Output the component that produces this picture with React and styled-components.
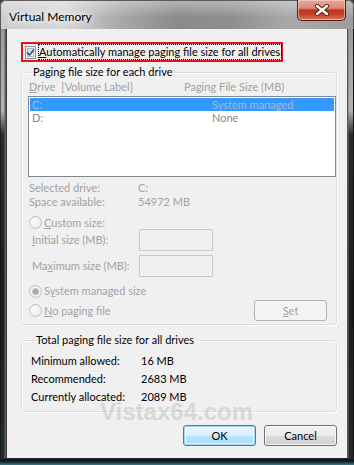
import React from 'react';
import styled, { createGlobalStyle, css } from 'styled-components';

const Global = createGlobalStyle`
  html, body { margin: 0; padding: 0; background: #3a3a3a; }
  body { font-family: Lato, "Liberation Sans", sans-serif; font-size: 11px; color: #000; }
  * { box-sizing: border-box; }
`;

const Window = styled.div`
  width: 354px;
  height: 465px;
  display: grid;
  grid-template-columns: 7px 340px 7px;
  grid-template-rows: 29px 429px 7px;
  border-radius: 6px 6px 0 0;
  overflow: hidden;
  background: linear-gradient(180deg, #c4c4c4 0px, #9a9a9a 29px, #a9a9a9 80px, #b3b3b3 110px, #2b2b2b 135px, #1c1c1c 300px, #202a2e 455px, #1d4a57 465px);
`;

const TitleBar = styled.div`
  grid-column: 1 / 4;
  display: flex;
  align-items: flex-start;
  padding: 0 7px 0 8px;
  background:
    linear-gradient(180deg, rgba(255,255,255,0.35) 0%, rgba(255,255,255,0) 60%),
    linear-gradient(90deg, #cdcdcd 0%, #d6d6d6 18%, #a8a8a8 34%, #8a8a8a 50%, #8e8e8e 65%, #a9a9a9 82%, #9c9c9c 100%);
  border: 1px solid #5a5a5a;
  border-bottom: none;
  border-radius: 6px 6px 0 0;
`;

const Title = styled.span`
  margin-top: 8px;
  line-height: 15px;
  font-size: 12px;
  color: #000;
  text-shadow: 0 0 6px #fff, 0 0 10px #fff, 0 0 14px rgba(255,255,255,0.9);
`;

const CloseButton = styled.div`
  margin-left: auto;
  margin-top: -1px;
  width: 49px;
  height: 21px;
  border: 1px solid #4f1a12;
  border-top: none;
  border-radius: 0 0 5px 5px;
  display: flex;
  align-items: center;
  justify-content: center;
  background: linear-gradient(180deg, #e8a89c 0%, #dc8a7a 40%, #b8321c 52%, #c2462c 75%, #de7a58 100%);
  box-shadow: inset 0 0 0 1px rgba(255,220,210,0.55);
`;

const SideFrame = styled.div`
  grid-row: 2;
  grid-column: ${p => p.$right ? 3 : 1};
  background: ${p => p.$right
    ? 'linear-gradient(90deg, #3c3c3c 0px, #6f6f6f 1px, transparent 2px, transparent 6px, #101010 6px)'
    : 'linear-gradient(90deg, #101010 0px, transparent 1px, transparent 4px, #6f6f6f 5px, #3c3c3c 6px)'};
`;

const BottomFrame = styled.div`
  grid-column: 1 / 4;
  grid-row: 3;
  background: linear-gradient(180deg, #3c3c3c 0px, #151515 1px, #151515 3px, #1e4a58 5px, #3d7a8a 7px);
`;

const Client = styled.div`
  grid-column: 2;
  grid-row: 2;
  position: relative;
  background: #f0f0f0;
  display: flex;
  flex-direction: column;
  padding: 13px 10px 12px 14px;
`;

const AutoBox = styled.div`
  align-self: flex-start;
  width: 262px;
  height: 20px;
  border: 2px solid #e2141e;
  display: flex;
  align-items: center;
  padding-left: 2px;
  gap: 2px;
`;

const CheckBox = styled.span`
  width: 13px;
  height: 13px;
  border: 1px solid #8e8f8f;
  background: #f4f4f4;
  display: flex;
  align-items: center;
  justify-content: center;
  position: relative;
  &::before {
    content: '';
    position: absolute;
    inset: 1px;
    border: 1px solid #b1b5ba;
    background: linear-gradient(135deg, #cfd3d8 0%, #eef0f2 60%, #fbfbfb 100%);
  }
  svg { position: relative; }
`;

const FocusLabel = styled.span`
  border: 1px dotted #000;
  line-height: 14px;
  padding-right: 1px;
  white-space: nowrap;
`;

const Group = styled.fieldset`
  margin: ${p => p.$mt}px 0 0 0;
  width: 316px;
  border: 1px solid #d5dfe5;
  border-radius: 3px;
  box-shadow: inset 1px 1px 0 #fff, 1px 1px 0 #fff;
  padding: ${p => p.$pad};
  min-inline-size: 0;
  display: flex;
  flex-direction: column;
`;

const Legend = styled.legend`
  margin-left: 3px;
  padding: 0 2px;
  line-height: 14px;
  font-size: 11px;
  color: #000;
`;

const Disabled = '#a2a2a2';

const HeaderRow = styled.div`
  margin-top: 1px;
  display: grid;
  grid-template-columns: 155px 1fr;
  padding-left: 1px;
  line-height: 14px;
  color: ${Disabled};
  white-space: nowrap;
`;

const Gap = styled.span`
  display: inline-block;
  width: ${p => p.$w}px;
`;

const ListBox = styled.div`
  margin-top: 2px;
  width: 308px;
  height: 81px;
  border: 1px solid #828790;
  background: #fff;
  padding: 1px;
`;

const ListRow = styled.div`
  height: 13px;
  line-height: 13px;
  display: grid;
  grid-template-columns: 180px 1fr;
  padding-left: 2px;
  ${p => p.$selected ? css`
    background: #3399ff;
    color: #9ebbe0;
  ` : css`
    color: #8a8a8a;
  `}
`;

const InfoBlock = styled.div`
  margin-top: 4px;
  display: grid;
  grid-template-columns: 109px 1fr;
  grid-auto-rows: 14px;
  line-height: 14px;
  padding-left: 1px;
  color: ${Disabled};
`;

const RadioRow = styled.div`
  margin-top: ${p => p.$mt}px;
  height: ${p => p.$h}px;
  display: flex;
  align-items: center;
  gap: 2px;
  padding-left: 1px;
  color: ${Disabled};
  line-height: 14px;
`;

const Radio = styled.span`
  width: 13px;
  height: 13px;
  border-radius: 50%;
  border: 1px solid #c2c2c2;
  background: radial-gradient(circle at 40% 40%, #fcfcfc 0%, #ececec 70%, #e2e2e2 100%);
  display: flex;
  align-items: center;
  justify-content: center;
  flex: none;
  &::after {
    content: '';
    display: ${p => p.$checked ? 'block' : 'none'};
    width: 5px;
    height: 5px;
    border-radius: 50%;
    background: #a8a8a8;
    box-shadow: 0 0 0 1px #c8c8c8;
  }
`;

const SizeRow = styled.div`
  margin-top: ${p => p.$mt}px;
  display: grid;
  grid-template-columns: 107px 74px;
  align-items: center;
  padding-left: 4px;
  color: ${Disabled};
  line-height: 14px;
`;

const TextBox = styled.span`
  height: 22px;
  border: 1px solid #c9c9c9;
  background: #f0f0f0;
  border-radius: 1px;
`;

const SpreadRow = styled(RadioRow)`
  padding-right: 9px;
`;

const Button = styled.button`
  font: inherit;
  font-size: 11px;
  width: 73px;
  height: 21px;
  border-radius: 3px;
  padding: 0;
  line-height: 18px;
  ${p => p.$disabled ? css`
    margin-left: auto;
    color: #a0a0a0;
    border: 1px solid #adb2b5;
    background: #f4f4f4;
  ` : css`
    color: #000;
    border: 1px solid #707070;
    background: linear-gradient(180deg, #f2f2f2 0%, #ebebeb 50%, #dddddd 51%, #cfcfcf 100%);
    box-shadow: inset 0 0 0 1px rgba(255,255,255,0.8);
  `}
  ${p => p.$focus && css`
    border-color: #3c7fb1;
    background: linear-gradient(180deg, #eaf6fd 0%, #d9f0fc 50%, #bee6fd 51%, #a7d9f5 100%);
    box-shadow: inset 0 0 0 1px #9fd6f4, inset 0 0 0 2px rgba(255,255,255,0.6);
  `}
`;

const TotalsBlock = styled.div`
  display: grid;
  grid-template-columns: 110px 1fr;
  grid-auto-rows: 18px;
  align-items: center;
  line-height: 12px;
`;

const ButtonRow = styled.div`
  margin-top: 13px;
  display: flex;
  justify-content: flex-end;
  gap: 8px;
`;

const Watermark = styled.div`
  position: absolute;
  left: 93px;
  top: 375px;
  font-family: "Liberation Sans", Arial, sans-serif;
  font-weight: bold;
  font-size: 24px;
  line-height: 16px;
  color: rgba(205, 205, 205, 0.7);
  pointer-events: none;
`;

const U = styled.span`
  text-decoration: underline;
`;

export default function App() {
  return (
    <>
      <Global />
      <Window>
        <TitleBar>
          <Title>Virtual Memory</Title>
          <CloseButton>
            <svg width="16" height="12" viewBox="0 0 16 12">
              <path d="M3 2 L13 10 M13 2 L3 10" stroke="#5a1a10" strokeWidth="4.2" strokeLinecap="round" fill="none" />
              <path d="M3 2 L13 10 M13 2 L3 10" stroke="#fff" strokeWidth="2.4" strokeLinecap="round" fill="none" />
            </svg>
          </CloseButton>
        </TitleBar>
        <SideFrame />
        <Client>
          <AutoBox>
            <CheckBox>
              <svg width="9" height="9" viewBox="0 0 9 9">
                <path d="M1 4.5 L3.5 7 L8 1.5" stroke="#3b5499" strokeWidth="1.8" fill="none" />
              </svg>
            </CheckBox>
            <FocusLabel><U>A</U>utomatically manage paging file size for all drives</FocusLabel>
          </AutoBox>

          <Group $mt={3} $pad="0 0 3px 6px">
            <Legend>Paging file size for each drive</Legend>
            <HeaderRow>
              <span><U>D</U>rive<Gap $w={6} />[Volume Label]</span>
              <span>Paging File Size (MB)</span>
            </HeaderRow>
            <ListBox>
              <ListRow $selected><span>C:</span><span>System managed</span></ListRow>
              <ListRow><span>D:</span><span>None</span></ListRow>
            </ListBox>
            <InfoBlock>
              <span>Selected drive:</span><span>C:</span>
              <span>Space available:</span><span>54972 MB</span>
            </InfoBlock>
            <RadioRow $mt={7} $h={13}>
              <Radio />
              <span><U>C</U>ustom size:</span>
            </RadioRow>
            <SizeRow $mt={0}>
              <span><U>I</U>nitial size (MB):</span>
              <TextBox />
            </SizeRow>
            <SizeRow $mt={4}>
              <span>Ma<U>x</U>imum size (MB):</span>
              <TextBox />
            </SizeRow>
            <RadioRow $mt={7} $h={14}>
              <Radio $checked />
              <span>S<U>y</U>stem managed size</span>
            </RadioRow>
            <SpreadRow $mt={2} $h={21}>
              <Radio />
              <span><U>N</U>o paging file</span>
              <Button $disabled><U>S</U>et</Button>
            </SpreadRow>
          </Group>

          <Group $mt={8} $pad="5px 0 5px 9px">
            <Legend>Total paging file size for all drives</Legend>
            <TotalsBlock>
              <span>Minimum allowed:</span><span>16 MB</span>
              <span>Recommended:</span><span>2683 MB</span>
              <span>Currently allocated:</span><span>2089 MB</span>
            </TotalsBlock>
          </Group>

          <ButtonRow>
            <Button $focus>OK</Button>
            <Button>Cancel</Button>
          </ButtonRow>

          <Watermark>Vistax64.com</Watermark>
        </Client>
        <SideFrame $right />
        <BottomFrame />
      </Window>
    </>
  );
}
